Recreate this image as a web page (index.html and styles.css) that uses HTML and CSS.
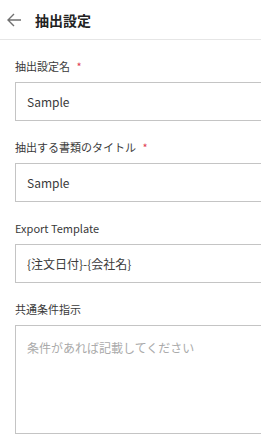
FILE: index.html
```html
<!DOCTYPE html>
<html lang="ja">
<head>
  <meta charset="UTF-8">
  <meta name="viewport" content="width=device-width, initial-scale=1.0">
  <title>抽出設定</title>
  <link rel="stylesheet" href="styles.css">
</head>
<body>
  <header class="top-bar">
    <svg class="back-icon" width="16" height="16" viewBox="0 0 16 16">
      <path d="M15 8H2M8 2L2 8l6 6" fill="none" stroke="#707070" stroke-width="1.4"/>
    </svg>
    <h1>抽出設定</h1>
  </header>
  <div class="form">
    <div class="field">
      <label>抽出設定名 <span class="req">*</span></label>
      <input type="text" value="Sample">
    </div>
    <div class="field">
      <label>抽出する書類のタイトル <span class="req">*</span></label>
      <input type="text" value="Sample">
    </div>
    <div class="field">
      <label>Export Template</label>
      <input type="text" value="{注文日付}-{会社名}">
    </div>
    <div class="field">
      <label>共通条件指示</label>
      <textarea placeholder="条件があれば記載してください"></textarea>
    </div>
  </div>
</body>
</html>
```
FILE: styles.css
```css
body {
  margin: 0;
  font-family: "Noto Sans CJK JP", "Noto Sans", sans-serif;
  color: #333;
  background: #fff;
  overflow: hidden;
}
.top-bar {
  display: flex;
  align-items: center;
  height: 39px;
  border-bottom: 1px solid #e6e6e6;
  padding-left: 6px;
}
.back-icon {
  margin-right: 13px;
}
.top-bar h1 {
  margin: 0;
  font-size: 14px;
  font-weight: 700;
  color: #222;
}
.form {
  padding: 17px 0 0 15px;
}
.field {
  margin-bottom: 17px;
}
.field label {
  display: block;
  height: 18px;
  font-size: 11px;
  line-height: 18px;
  margin-bottom: 7px;
  color: #3a3a3a;
}
.req {
  color: #e0404f;
  margin-left: 4px;
}
.field input, .field textarea {
  box-sizing: border-box;
  display: block;
  width: 300px;
  border: 1px solid #c4c4c4;
  border-radius: 0;
  font-family: inherit;
  font-size: 12px;
  color: #3a3a3a;
  outline: none;
}
.field input {
  height: 39px;
  padding: 0 11px;
}
.field textarea {
  height: 109px;
  padding: 13px 11px;
  resize: none;
  line-height: 18px;
}
.field textarea::placeholder {
  color: #aaa;
}
```
